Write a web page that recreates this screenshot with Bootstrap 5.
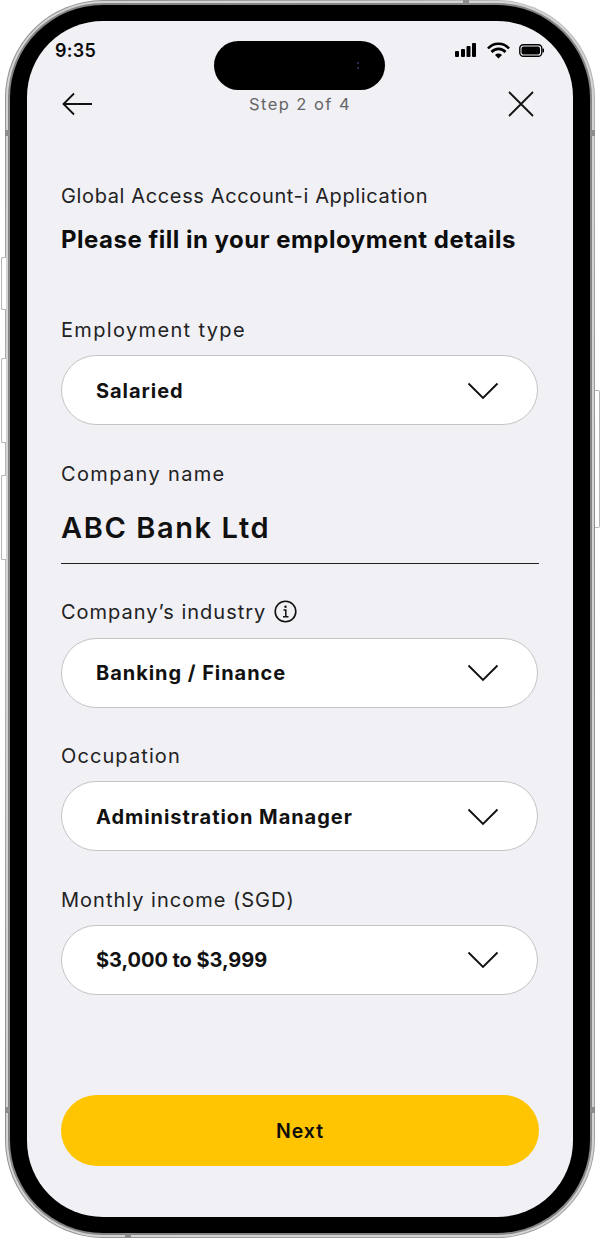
<!DOCTYPE html>
<html lang="en"><head><meta charset="utf-8"><title>Employment details</title>
<link href="https://cdn.jsdelivr.net/npm/bootstrap@5.3.0/dist/css/bootstrap.min.css" rel="stylesheet">
<style>
html,body{background:#fff;margin:0}
body{font-family:Inter,"Liberation Sans",sans-serif;color:#111;width:606px;height:1239px;overflow:hidden}
.device{position:relative;width:590px;height:1238px;margin-left:5px;border-radius:98px;padding:1px;background:linear-gradient(135deg,#8a8a8a,#bdbdbd 30%,#8f8f8f 60%,#a5a5a5)}
.device-lip{width:100%;height:100%;border-radius:97px;padding:4px;background:#d4d4d4}
.device-black{width:100%;height:100%;border-radius:93px;padding:16px 17px;background:#000;box-shadow:0 0 0 2px #858585}
.screen{position:relative;width:100%;height:100%;border-radius:76px;background:#f0f0f5;padding:0 34px 51px;overflow:hidden}
.island{position:absolute;top:20px;left:187px;width:171px;height:49px;border-radius:25px;background:#000}
.island-lens{position:absolute;top:21px;right:26px;width:2px;height:7px;border-top:2px solid #26265c;border-bottom:2px solid #26265c}
.side-key{position:absolute;width:5px;background:#fff;border:1px solid #b5b5b5}
.key-a{left:-4px;top:257px;height:53px;border-right:0;border-radius:2px 0 0 2px}
.key-b{left:-4px;top:358px;height:85px;border-right:0;border-radius:2px 0 0 2px}
.key-c{left:-4px;top:475px;height:85px;border-right:0;border-radius:2px 0 0 2px}
.key-d{right:-5px;top:390px;height:138px;border-left:0;border-radius:0 2px 2px 0}
.band{position:absolute;background:#8c8c8c}
.band-t{left:458px;top:0;width:6px;height:5px}
.band-b{left:120px;bottom:0;width:6px;height:5px}
.band-l1{left:0;top:130px;width:5px;height:6px}.band-r1{right:0;top:130px;width:5px;height:6px}
.band-l2{left:0;top:1107px;width:5px;height:6px}.band-r2{right:0;top:1107px;width:5px;height:6px}
.status-row{height:60px;padding:21px 0 0 0;margin:0 -5px 0 -6px}
.clock{font-size:18px;font-weight:600;line-height:17px;letter-spacing:.3px;color:#0b0b0b}
.nav-row{height:46px;margin-bottom:57px}
.back-icon{margin-left:1px}
.close-icon{margin-right:4px}
.step-text{font-size:16.500px;color:#666;letter-spacing:1.450px;line-height:1}
.lead-text{font-size:20px;letter-spacing:.63px;line-height:24px;color:#222;margin-bottom:18px}
.title-text{font-size:24px;font-weight:700;letter-spacing:.5px;line-height:28px;color:#0d0d0d;margin:0 0 64px}
.field-label{font-size:20px;letter-spacing:1.100px;line-height:24px;color:#222;margin-bottom:13px}
.sp-wide{letter-spacing:1.350px}
.sp-mid{letter-spacing:1px}
.picker{height:70px;width:477px;background:#fff;border:1px solid #c4c4c4;border-radius:35px;padding:1px 38px 0 34px;margin-bottom:36.500px;font-size:20px;font-weight:700;letter-spacing:.95px;color:#111}
.sp-none{letter-spacing:-.05px}
.picker:hover,.picker:active{background:#fff!important;border-color:#c4c4c4!important;color:#111!important}
.typed{font-size:29px;font-weight:600;letter-spacing:1.600px;line-height:36px;color:#111;border-bottom:1.500px solid #222;padding:24px 0 17px;margin-bottom:36px}
.field-label-tight{margin-bottom:14px}
.next-btn{height:71px;width:100%;background:#fec500;border:0;border-radius:36px;padding-top:8px;font-size:19.500px;font-weight:600;letter-spacing:1px;color:#0d0d0d}
.next-btn:hover,.next-btn:active{background:#fec500!important;color:#0d0d0d!important}
</style></head><body>
<div class="device">
 <div class="side-key key-a"></div><div class="side-key key-b"></div><div class="side-key key-c"></div><div class="side-key key-d"></div>
 <div class="device-lip"><div class="device-black"><div class="screen d-flex flex-column">
  <div class="island"><div class="island-lens"></div></div>
  <div class="status-row d-flex justify-content-between align-items-start">
    <span class="clock">9:35</span>
    <svg width="89" height="17" viewBox="0 0 89 17" aria-hidden="true">
      <rect x="0" y="9" width="4" height="6" rx="1"/><rect x="6" y="7" width="4" height="8" rx="1"/><rect x="11.500" y="4" width="4" height="11" rx="1"/><rect x="17" y="1" width="4" height="14" rx="1"/>
      <path d="M33 6.500a14 14 0 0 1 21 0M36.500 10a9.500 9.500 0 0 1 14 0" fill="none" stroke="#000" stroke-width="2.600"/><path d="M40 13a5 5 0 0 1 7 0l-3.500 3.500z"/>
      <rect x="64.800" y="2.800" width="22" height="11.400" rx="3.500" fill="none" stroke="#000" stroke-width="1.400"/><rect x="66.500" y="4.500" width="18.500" height="8" rx="2"/><rect x="87.500" y="6.500" width="1.500" height="4" rx=".7"/>
    </svg>
  </div>
  <div class="nav-row d-flex justify-content-between align-items-center">
    <svg class="back-icon" width="31" height="24" viewBox="0 0 31 24" aria-hidden="true"><path d="M1.500 12H30M12 1.500 1.500 12 12 22.500" fill="none" stroke="#111" stroke-width="1.800"/></svg>
    <span class="step-text">Step 2 of 4</span>
    <svg class="close-icon" width="28" height="28" viewBox="0 0 28 28" aria-hidden="true"><path d="M2 2 26 26M26 2 2 26" fill="none" stroke="#111" stroke-width="1.800"/></svg>
  </div>
  <div class="lead-text">Global Access Account-i Application</div>
  <h1 class="title-text">Please fill in your employment details</h1>
  <div class="field-label sp-wide">Employment type</div>
  <button type="button" class="btn picker d-flex justify-content-between align-items-center">Salaried<svg width="32" height="18" viewBox="0 0 32 18" aria-hidden="true"><path d="M1.500 1.500 16 16 30.500 1.500" fill="none" stroke="#111" stroke-width="1.900"/></svg></button>
  <div class="field-label sp-wide mb-0">Company name</div>
  <div class="typed">ABC Bank Ltd</div>
  <div class="field-label sp-mid field-label-tight d-flex align-items-center gap-2">Company’s industry
    <svg width="23" height="23" viewBox="0 0 23 23" aria-hidden="true"><circle cx="11.500" cy="11.500" r="10.300" fill="none" stroke="#111" stroke-width="1.600"/><circle cx="11.500" cy="6.800" r="1.200" fill="#111"/><path d="M9.500 10h2.300v6.800M9 16.800h5.500" fill="none" stroke="#111" stroke-width="1.500"/></svg></div>
  <button type="button" class="btn picker d-flex justify-content-between align-items-center">Banking / Finance<svg width="32" height="18" viewBox="0 0 32 18" aria-hidden="true"><path d="M1.500 1.500 16 16 30.500 1.500" fill="none" stroke="#111" stroke-width="1.900"/></svg></button>
  <div class="field-label">Occupation</div>
  <button type="button" class="btn picker d-flex justify-content-between align-items-center">Administration Manager<svg width="32" height="18" viewBox="0 0 32 18" aria-hidden="true"><path d="M1.500 1.500 16 16 30.500 1.500" fill="none" stroke="#111" stroke-width="1.900"/></svg></button>
  <div class="field-label sp-mid">Monthly income (SGD)</div>
  <button type="button" class="btn picker sp-none d-flex justify-content-between align-items-center">$3,000 to $3,999<svg width="32" height="18" viewBox="0 0 32 18" aria-hidden="true"><path d="M1.500 1.500 16 16 30.500 1.500" fill="none" stroke="#111" stroke-width="1.900"/></svg></button>
  <button type="button" class="btn next-btn mt-auto">Next</button>
 </div></div></div>
 <div class="band band-t"></div><div class="band band-b"></div><div class="band band-l1"></div><div class="band band-r1"></div><div class="band band-l2"></div><div class="band band-r2"></div>
</div>
<script src="https://cdn.jsdelivr.net/npm/bootstrap@5.3.0/dist/js/bootstrap.bundle.min.js"></script>
</body></html>
